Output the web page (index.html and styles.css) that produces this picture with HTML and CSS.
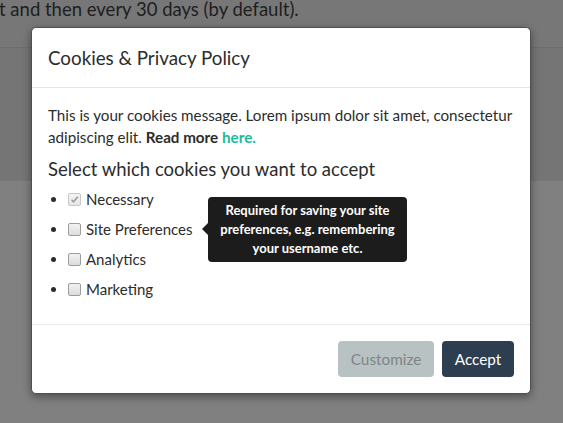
FILE: index.html
```html
<!DOCTYPE html>
<html>
<head>
<meta charset="utf-8">
<link rel="stylesheet" href="styles.css">
</head>
<body>
<div class="page">
  <div class="band-top"><p class="lead">t and then every 30 days (by default).</p></div>
  <div class="band-mid"></div>
  <div class="band-bottom"></div>
</div>
<div class="modal">
  <div class="modal-header"><h4 class="modal-title">Cookies &amp; Privacy Policy</h4></div>
  <div class="modal-body">
    <p class="msg">This is your cookies message. Lorem ipsum dolor sit amet, consectetur<br>adipiscing elit. <b>Read more</b> <a class="link" href="#">here.</a></p>
    <h5 class="select">Select which cookies you want to accept</h5>
    <ul class="list">
      <li><label><span class="box disabled"><svg width="9" height="9" viewBox="0 0 9 9"><path d="M1.5 4.8 L3.5 6.8 L7.8 1.8" fill="none" stroke="#9a9a9a" stroke-width="1.6"/></svg></span>Necessary</label></li>
      <li class="has-tip"><label><span class="box"></span>Site Preferences</label>
        <div class="tip"><span class="tip-arrow"></span>Required for saving your site preferences, e.g. remembering your username etc.</div>
      </li>
      <li><label><span class="box"></span>Analytics</label></li>
      <li><label><span class="box"></span>Marketing</label></li>
    </ul>
  </div>
  <div class="modal-footer">
    <button class="btn btn-default">Customize</button>
    <button class="btn btn-primary">Accept</button>
  </div>
</div>
</body>
</html>
```
FILE: styles.css
```css
html, body { margin: 0; padding: 0; }
body {
  width: 563px;
  height: 423px;
  overflow: hidden;
  position: relative;
  font-family: Lato, "Open Sans", sans-serif;
  background: #808080;
}
.page { display: flex; flex-direction: column; height: 423px; }
.band-top {
  height: 47px;
  background: #777777;
  border-bottom: 1px solid #6e6e6e;
}
.lead {
  margin: 0;
  font-size: 18.5px;
  line-height: 22px;
  color: #1e1e1e;
  margin-left: -1px;
  margin-top: -2px;
}
.band-mid { height: 133px; background: #757575; }
.band-bottom { flex: 1; background: #808080; }

.modal {
  position: absolute;
  left: 31px;
  top: 27px;
  width: 498px;
  background: #fff;
  border: 1px solid #4f4f4f;
  border-radius: 5px;
  box-shadow: 0 3px 9px rgba(0,0,0,0.4);
  color: #2c2c2c;
}
.modal-header {
  padding: 15px 16px;
  border-bottom: 1px solid #e5e5e5;
}
.modal-title {
  margin: 0;
  font-size: 18.8px;
  font-weight: 400;
  line-height: 29px;
}
.modal-body { padding: 16px 16px 20px; }
.msg {
  margin: 0;
  font-size: 15.2px;
  line-height: 22px;
  white-space: nowrap;
}
.msg b { font-weight: 700; }
.link { color: #18bc9c; font-weight: 700; text-decoration: none; }
.select {
  margin: 10px 0 4px;
  font-size: 18.5px;
  font-weight: 400;
  line-height: 22px;
}
.list {
  margin: 0;
  padding-left: 20px;
  font-size: 15px;
  line-height: 30px;
}
.list li { position: relative; height: 30px; }
.list label { display: inline-flex; align-items: center; height: 30px; vertical-align: top; }
.box {
  width: 11px;
  height: 11px;
  border: 1px solid #9c9c9c;
  border-radius: 2px;
  background: linear-gradient(#f2f2f2, #dcdcdc);
  margin-right: 5px;
  display: inline-flex;
  align-items: center;
  justify-content: center;
  box-sizing: content-box;
}
.box.disabled { border-color: #c6c6c6; background: linear-gradient(#f4f4f4, #e6e6e6); }
.box svg { display: block; }
.tip {
  position: absolute;
  left: 140px;
  top: -17px;
  width: 185px;
  padding: 4px 7px;
  background: #1c1c1c;
  color: #fff;
  border-radius: 4px;
  font-size: 13px;
  font-weight: 700;
  line-height: 19px;
  text-align: center;
}
.tip-arrow {
  position: absolute;
  left: -6px;
  top: 26px;
  width: 0;
  height: 0;
  border-top: 6px solid transparent;
  border-bottom: 6px solid transparent;
  border-right: 6px solid #1c1c1c;
}
.modal-footer {
  padding: 16px 16px 16px;
  border-top: 1px solid #e9e9e9;
  display: flex;
  justify-content: flex-end;
  gap: 8px;
}
.btn {
  font-family: Lato, "Open Sans", sans-serif;
  font-size: 15.3px;
  line-height: 20px;
  padding: 8px 10px;
  border: 0;
  border-radius: 4px;
  height: 36px;
}
.btn-default { background: #b9c2c3; color: #7c8687; width: 96px; }
.btn-primary { background: #2c3e50; color: #fff; width: 72px; }
```
